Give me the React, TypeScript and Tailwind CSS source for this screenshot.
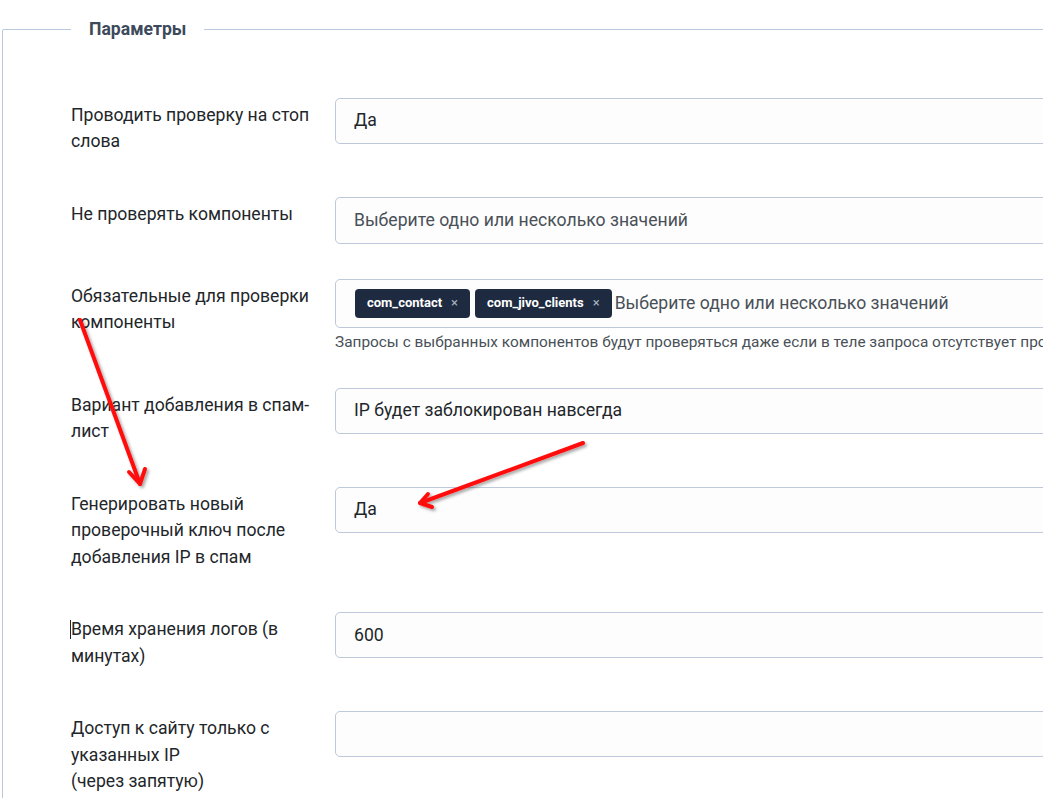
import type { ReactNode } from 'react'

const labelCls = 'w-[264px] shrink-0 pt-1 pb-[7px] text-[17.6px] leading-[26.5px] text-[#22262a]'
const inputCls =
  'h-[46px] w-full flex items-center rounded-[5px] border border-[#bdc9da] bg-[#fdfdfd] px-[18px] text-[17.6px] text-[#22262a]'

function Row({ label, children }: { label: ReactNode; children: ReactNode }) {
  return (
    <div className="flex items-start mb-[35px]">
      <div className={labelCls}>{label}</div>
      <div className="flex-1">{children}</div>
    </div>
  )
}

function Chip({ text }: { text: string }) {
  return (
    <span className="inline-flex items-center h-[29px] rounded-[4px] bg-[#1d2a3f] px-[12px] text-[13px] font-bold text-white">
      {text}
      <span className="ml-[9px] text-[13px] font-normal text-[#aab3c0]">×</span>
    </span>
  )
}

export default function App() {
  return (
    <div className="relative w-[1043px] h-[798px] overflow-hidden bg-white font-['Roboto',sans-serif]">
      <fieldset className="ml-[2px] mt-[21px] w-[1200px] rounded-tl-[2px] border border-[#b9c9e0] pl-[68px] pt-[59px]">
        <legend className="px-[18px] text-[17.6px] font-bold leading-none text-[#3d4a5b]">Параметры</legend>

        <div className="w-[1060px]">
          <Row label={<>Проводить проверку на стоп<br />слова</>}>
            <div className={inputCls}>Да</div>
          </Row>

          <Row label="Не проверять компоненты">
            <div className={inputCls + ' h-[47px]'}>
              <span className="text-[#495057]">Выберите одно или несколько значений</span>
            </div>
          </Row>

          <Row label={<>Обязательные для проверки<br />компоненты</>}>
            <div className="h-[49px] w-full flex items-center gap-[5px] rounded-[5px] border border-[#bdc9da] bg-[#fdfdfd] pl-[19px] text-[17.6px]">
              <Chip text="com_contact" />
              <Chip text="com_jivo_clients" />
              <span className="-ml-[2px] whitespace-nowrap text-[#495057]">Выберите одно или несколько значений</span>
            </div>
            <p className="mt-[3px] text-[15.4px] leading-[22px] text-[#495057] whitespace-nowrap">
              Запросы с выбранных компонентов будут проверяться даже если в теле запроса отсутствует проверочный ключ
            </p>
          </Row>

          <Row label={<>Вариант добавления в спам-<br />лист</>}>
            <div className={inputCls + ' border-[#457a52]'}>IP будет заблокирован навсегда</div>
          </Row>

          <Row label={<>Генерировать новый<br />проверочный ключ после<br />добавления IP в спам</>}>
            <div className={inputCls}>Да</div>
          </Row>

          <Row
            label={
              <>
                <span className="relative">
                  <span className="absolute -left-[1px] top-[1px] h-[19px] w-px bg-[#22262a]" />
                  Время хранения логов (в
                </span>
                <br />
                минутах)
              </>
            }
          >
            <div className={inputCls}>600</div>
          </Row>

          <Row label={<>Доступ к сайту только с<br />указанных IP<br />(через запятую)</>}>
            <div className={inputCls}></div>
          </Row>
        </div>
      </fieldset>

      <svg className="pointer-events-none absolute inset-0" width="1043" height="798">
        <defs>
          <filter id="sh" x="-20%" y="-20%" width="140%" height="140%">
            <feDropShadow dx="2" dy="2" stdDeviation="1.5" floodColor="#000" floodOpacity="0.35" />
          </filter>
        </defs>
        <g stroke="#ff1010" strokeWidth="4" strokeLinecap="round" strokeLinejoin="round" fill="none" filter="url(#sh)">
          <path d="M80 320 L140 484" />
          <path d="M129 472 L140 484 L145 469" />
          <path d="M583 443 L420 503" />
          <path d="M428 494 L420 503 L432 507" />
        </g>
      </svg>
    </div>
  )
}
